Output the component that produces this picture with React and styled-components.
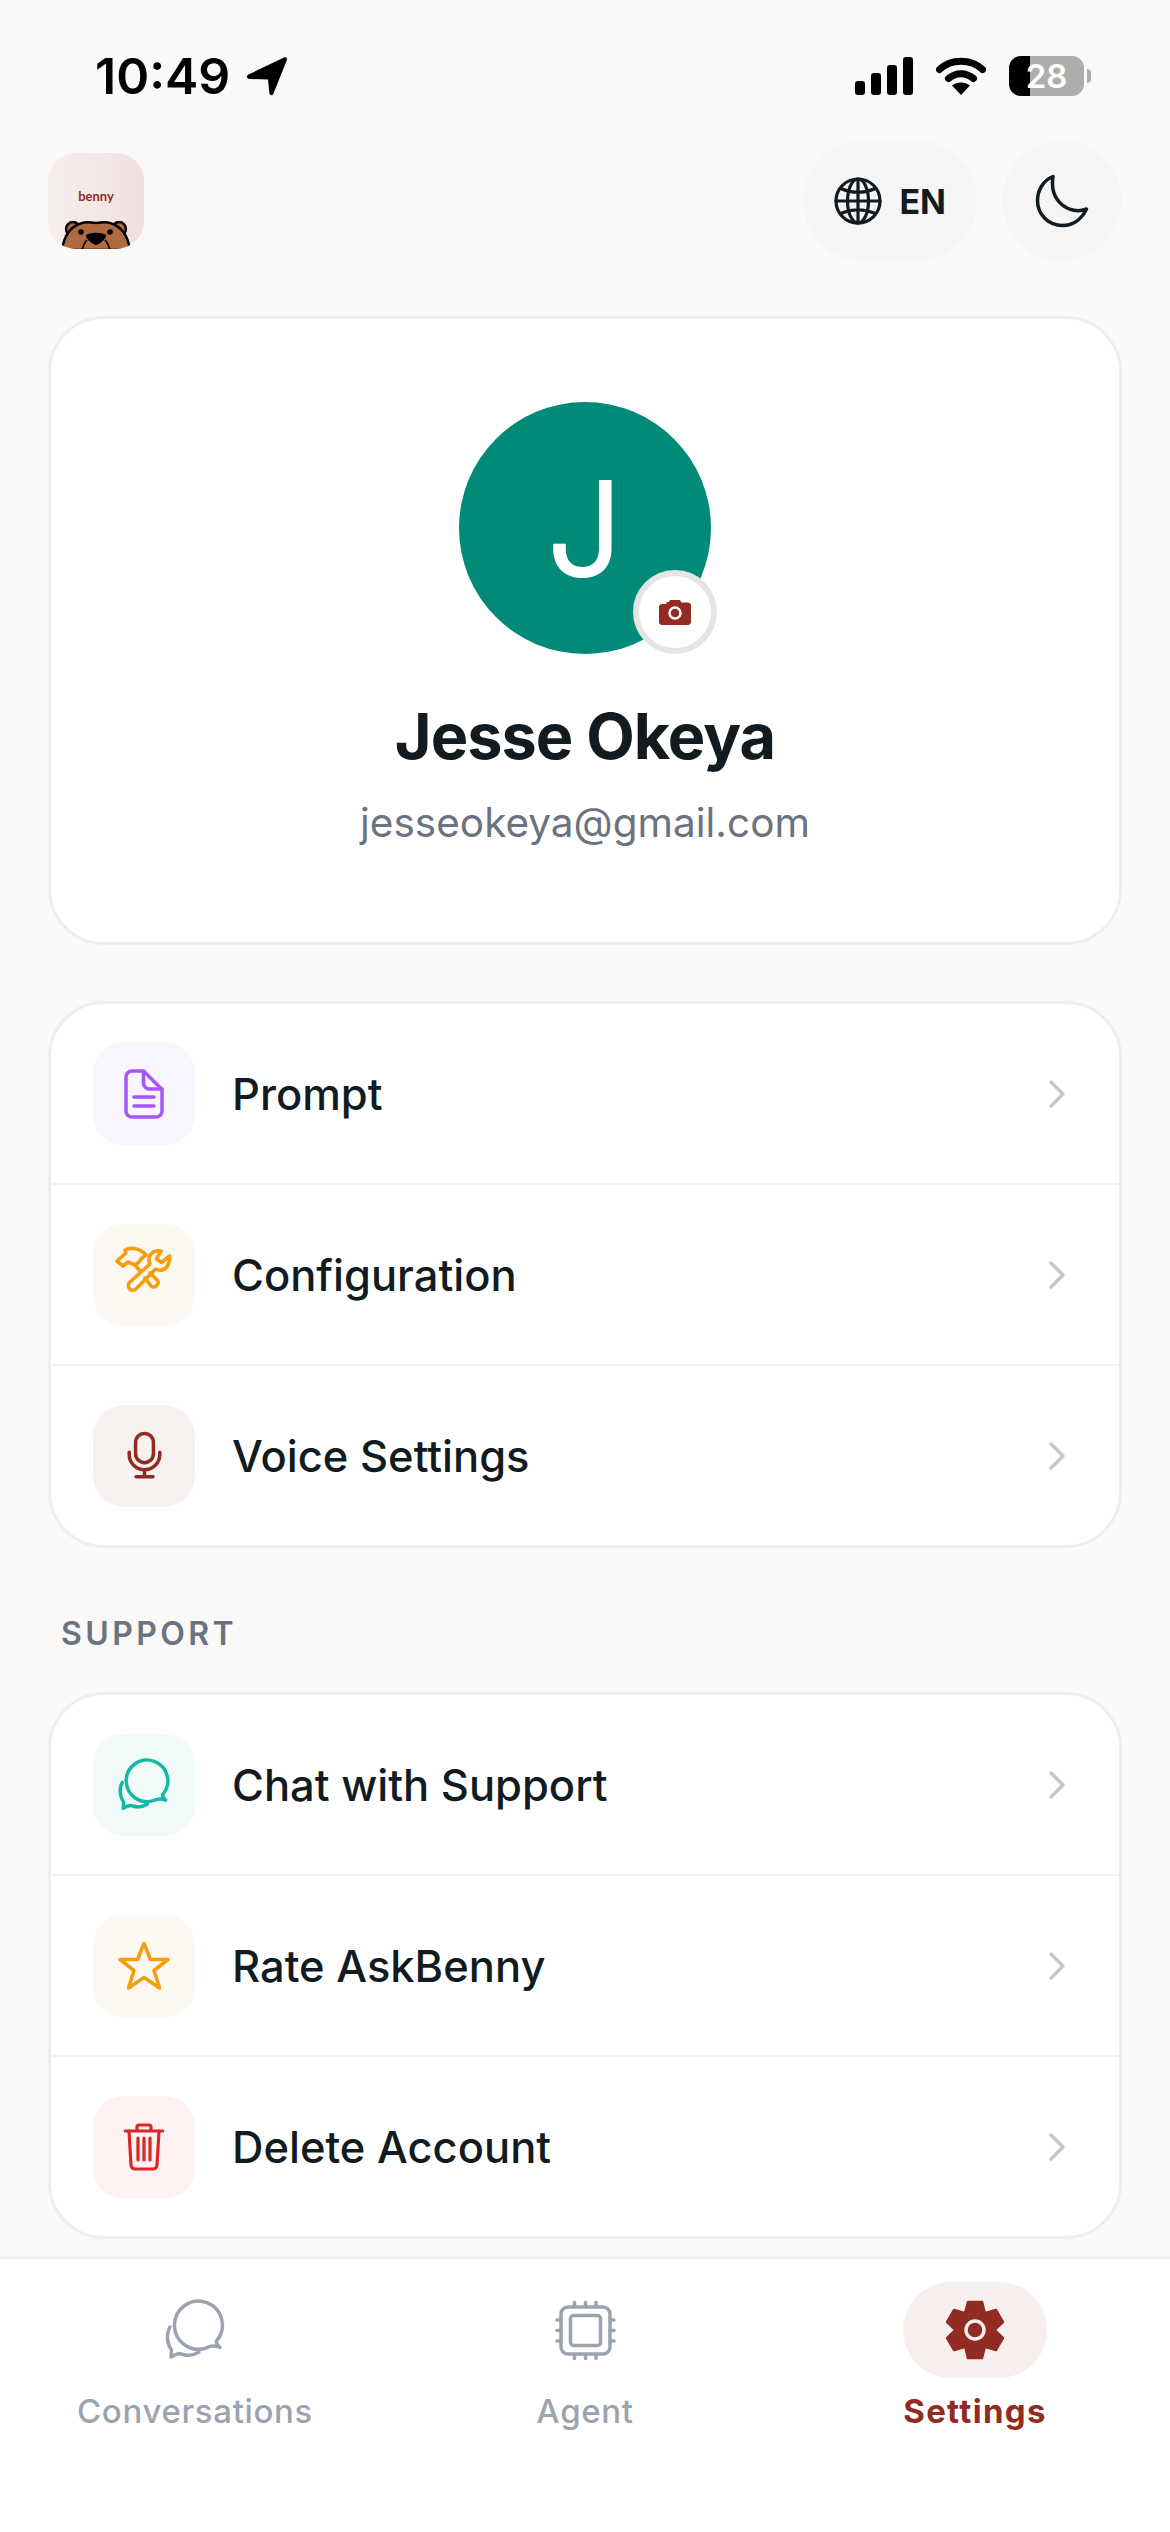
import React from 'react';
import styled, { createGlobalStyle } from 'styled-components';

const BRAND = '#922b21';
const INK = '#121b1f';

const GlobalStyle = createGlobalStyle`
  * { box-sizing: border-box; }
  html, body { margin: 0; padding: 0; background: #faf9f7; }
  body { font-family: Inter, "Liberation Sans", sans-serif; color: ${INK}; }
`;

const Screen = styled.div`
  width: 1170px;
  height: 2532px;
  display: flex;
  flex-direction: column;
  overflow: hidden;
`;

const Content = styled.main`
  flex: 1;
  min-height: 0;
`;

const StatusBar = styled.div`
  height: 141px;
  padding: 54px 79px 0 95px;
  display: flex;
  justify-content: space-between;
  align-items: flex-start;
  color: #000;
`;

const StatusGroup = styled.div`
  display: flex;
  align-items: center;
  height: 44px;
  gap: ${(p) => p.$gap}px;
`;

const Time = styled.span`
  font-size: 50px;
  font-weight: 600;
  line-height: 44px;
`;

const Battery = styled.div`
  position: relative;
  width: 75px;
  height: 40px;
  border-radius: 12px;
  background: linear-gradient(to right, #000 21px, #aeadab 21px);
  color: #fff;
  font-size: 33px;
  font-weight: 600;
  line-height: 40px;
  text-align: center;
  margin-right: 7px;

  &::after {
    content: '';
    position: absolute;
    right: -7px;
    top: 13px;
    width: 4px;
    height: 14px;
    border-radius: 0 4px 4px 0;
    background: #aeadab;
  }
`;

const Header = styled.header`
  display: flex;
  justify-content: space-between;
  align-items: center;
  height: 120px;
  padding: 0 48px 0 48px;
`;

const Logo = styled.div`
  width: 96px;
  height: 96px;
  border-radius: 28px;
  overflow: hidden;
  padding-top: 34px;
  display: flex;
  flex-direction: column;
  align-items: center;
  background: linear-gradient(to right, #f7efee, #f0dfde);
`;

const LogoText = styled.span`
  font-family: Lato, sans-serif;
  font-size: 13px;
  font-weight: 700;
  line-height: 18px;
  color: ${BRAND};
`;

const BeaverArt = styled.svg`
  margin-top: auto;
  display: block;
`;

const HeaderActions = styled.div`
  display: flex;
  gap: 25px;
`;

const RoundButton = styled.button`
  height: 120px;
  min-width: 120px;
  border: 0;
  border-radius: 60px;
  padding: ${(p) => (p.$wide ? '0 31px' : '0')};
  background: #f5f5f5;
  color: ${INK};
  display: flex;
  align-items: center;
  justify-content: center;
  gap: 17px;
  font-family: inherit;
  font-size: 34px;
  font-weight: 700;
`;

const Card = styled.section`
  margin: ${(p) => p.$top}px 48px 0 48px;
  background: #fff;
  border: 3px solid #efeeed;
  border-radius: 56px;
  overflow: hidden;
`;

const ProfileBody = styled.div`
  height: 623px;
  padding-top: 83px;
  display: flex;
  flex-direction: column;
  align-items: center;
`;

const AvatarWrap = styled.div`
  position: relative;
  width: 252px;
  height: 252px;
`;

const Avatar = styled.div`
  width: 100%;
  height: 100%;
  border-radius: 50%;
  background: #028a79;
  color: #fff;
  font-size: 134px;
  font-weight: 400;
  display: flex;
  align-items: center;
  justify-content: center;
`;

const CameraBadge = styled.div`
  position: absolute;
  left: 174px;
  top: 168px;
  width: 84px;
  height: 84px;
  border-radius: 50%;
  background: #fff;
  border: 6px solid #e5e5e5;
  display: flex;
  align-items: center;
  justify-content: center;
`;

const Name = styled.h1`
  margin: 46px 0 0;
  font-size: 63px;
  line-height: 72px;
  font-weight: 700;
  letter-spacing: -1px;
`;

const Email = styled.div`
  margin-top: 26px;
  font-size: 40.5px;
  line-height: 50px;
  color: #6b7280;
`;

const Row = styled.div`
  height: ${(p) => (p.$first ? 179 : 181)}px;
  padding: 0 53px 0 42px;
  display: flex;
  align-items: center;
  border-top: ${(p) => (p.$first ? '0' : '2px solid #f3f3f3')};
`;

const Tile = styled.div`
  width: 102px;
  height: 102px;
  flex: none;
  border-radius: 30px;
  background: ${(p) => p.$bg};
  display: flex;
  align-items: center;
  justify-content: center;
`;

const RowLabel = styled.span`
  flex: 1;
  margin-left: 37px;
  font-size: 43.5px;
  font-weight: 500;
`;

const SectionLabel = styled.div`
  margin: 66px 0 38px 61px;
  font-size: 32px;
  line-height: 40px;
  font-weight: 600;
  letter-spacing: 3.4px;
  color: #6b7280;
`;

const Nav = styled.nav`
  height: 276px;
  flex: none;
  padding-top: 23px;
  background: #fff;
  border-top: 3px solid #f0f0ef;
  display: grid;
  grid-template-columns: repeat(3, 1fr);
  align-items: start;
`;

const NavItem = styled.div`
  display: flex;
  flex-direction: column;
  align-items: center;
  font-size: 33px;
  line-height: 44px;
  letter-spacing: ${(p) => (p.$active ? 1.3 : 0.65)}px;
  font-weight: ${(p) => (p.$active ? 700 : 500)};
  color: ${(p) => (p.$active ? BRAND : '#9ca3af')};
`;

const NavPill = styled.div`
  width: 144px;
  height: 96px;
  margin-bottom: 11px;
  border-radius: 48px;
  background: ${(p) => (p.$active ? '#f6efed' : 'transparent')};
  display: flex;
  align-items: center;
  justify-content: center;
`;

const Outline = ({ w, h, box, color, sw = 3.5, children }) => (
  <svg width={w} height={h} viewBox={box} fill="none" stroke={color} strokeWidth={sw} strokeLinecap="round" strokeLinejoin="round">
    {children}
  </svg>
);

const LocationArrow = () => (
  <svg width="42" height="40" viewBox="0 0 42 40">
    <path d="M38 1.5c2-.8 3.4.8 2.8 2.8L27.5 37.5c-1 2.5-4 2-4.2-.7L22 23.5 3.5 23c-3 0-3.5-3.3-1-4.5z" fill="#000" />
  </svg>
);

const Signal = () => (
  <svg width="58" height="38" viewBox="0 0 58 38" fill="#000">
    <rect x="0" y="24" width="10" height="14" rx="3" />
    <rect x="16" y="16" width="10" height="22" rx="3" />
    <rect x="32" y="8" width="10" height="30" rx="3" />
    <rect x="48" y="0" width="10" height="38" rx="3" />
  </svg>
);

const Wifi = () => (
  <svg width="50" height="38" viewBox="0 0 50 38">
    <path d="M3.5 12.5C15 1.5 35 1.5 46.5 12.5" fill="none" stroke="#000" strokeWidth="7" strokeLinecap="round" />
    <path d="M12.5 21.5C20 15 30 15 37.5 21.5" fill="none" stroke="#000" strokeWidth="7" strokeLinecap="round" />
    <path d="M16 28.5c5-4 13-4 18 0L25 38z" fill="#000" />
  </svg>
);

const Beaver = () => (
  <BeaverArt width="72" height="31" viewBox="0 0 72 31">
    <circle cx="13" cy="11" r="7" fill="#b06a3f" stroke="#000" strokeWidth="2.4" />
    <circle cx="59" cy="11" r="7" fill="#b06a3f" stroke="#000" strokeWidth="2.4" />
    <path d="M2 32C4 18 11 8 22 5c5-2 9 0 14 0s9-2 14 0c11 3 18 13 20 27z" fill="#b06a3f" stroke="#000" strokeWidth="2.4" />
    <circle cx="21" cy="14" r="2.8" fill="#000" />
    <circle cx="50" cy="14" r="2.8" fill="#000" />
    <path d="M26 17c5-3 15-3 20 0 1 3-6 9-10 10-4-1-11-7-10-10z" fill="#000" />
    <path d="M22 32c1-4 2-7 5-10M50 32c-1-4-2-7-5-10" fill="none" stroke="#000" strokeWidth="1.6" />
  </BeaverArt>
);

const GlobeIcon = () => (
  <Outline w="48" h="48" box="0 0 48 48" color={INK} sw="3.2">
    <circle cx="24" cy="24" r="22" />
    <ellipse cx="24" cy="24" rx="10.5" ry="22" />
    <path d="M24 2v44M2 24h44M6.5 11.5Q24 19 41.5 11.5M6.5 36.5Q24 29 41.5 36.5" />
  </Outline>
);

const MoonIcon = () => (
  <Outline w="54" h="54" box="0 0 54 54" color={INK} sw="3.5">
    <path d="M18 2.5C8 6.5 2.5 16.5 2.5 26.5c0 14 11 25 25 25 10 0 19-6 24-16.5C35 41.5 14 28 18 2.5z" />
  </Outline>
);

const CameraIcon = () => (
  <svg width="32" height="26" viewBox="0 0 32 26">
    <path d="M3 5h4l1-2h2l1-2h10l1.5 2.5H29c1.600 0 3 1.400 3 3V23c0 1.600-1.400 3-3 3H3c-1.600 0-3-1.400-3-3V8c0-1.600 1.400-3 3-3z" fill={BRAND} />
    <circle cx="16" cy="14" r="5.5" fill="none" stroke="#fff" strokeWidth="2.4" />
  </svg>
);

const DocIcon = () => (
  <Outline w="40" h="50" box="0 0 40 50" color="#a855f7" sw="3.5">
    <path d="M8 2h11.5L38 20.5V42a6 6 0 0 1-6 6H8a6 6 0 0 1-6-6V8a6 6 0 0 1 6-6z" />
    <path d="M19.5 2v12a6 6 0 0 0 6 6H38M10 28h20M10 37h20" />
  </Outline>
);

const ToolsIcon = () => (
  <Outline w="70" h="60" box="0 0 70 60" color="#f59e0b" sw="3.6">
    <path d="M41 19 20.5 37.5a4.600 4.600 0 0 0 6.500 6.500L46.500 24c6 3 11 0 13-5 1-3 1.500-5 1-8l-8 6.500-5-3.500 4.500-8c-5-1-9 1-11 4.500-1.500 3-1.500 5.500 0 8.500z" />
    <path d="M37 10C31 3 22 2 16 5l1 3-9 8 6 5 5-4 7 3 4-3c1.500-3 4-5 7-7z" />
    <path d="M26 20l5 6M36 33l6 8a4.600 4.600 0 0 0 7-5l-8-8" />
  </Outline>
);

const MicIcon = () => (
  <Outline w="51" h="51" box="0 0 24 24" color={BRAND} sw="1.65">
    <rect x="7.8" y="1.6" width="8.4" height="13.8" rx="4.2" />
    <path d="M4.8 10.5v1a7.2 7.2 0 0 0 14.4 0v-1M12 18.700V22M8 22h8" />
  </Outline>
);

const ChatIcon = ({ color, w, h, sw }) => (
  <Outline w={w} h={h} box="0 0 90 80" color={color} sw={sw}>
    <path d="M66.5 51A24 24 0 1 0 57 57.6Q63 54.5 70 57.5Q66 54 66.5 51z" />
    <path d="M20 37C16 44 17 54 21.5 60L21 67Q28 62 33 64.5Q41 67 49 62" />
  </Outline>
);

const StarIcon = () => (
  <Outline w="52" h="50" box="0 0 52 50" color="#f59e0b" sw="3.5">
    <path d="M26 2.5 32.5 18.5H50L36 29.5 41.5 47 26 36.5 10.5 47 16 29.5 2 18.500H19.500z" />
  </Outline>
);

const TrashIcon = () => (
  <Outline w="40" h="48" box="0 0 40 48" color="#dc2626" sw="3.2">
    <path d="M1.5 8h37M13 8V4a2 2 0 0 1 2-2h10a2 2 0 0 1 2 2v4" />
    <path d="M5 8l2 34a4 4 0 0 0 4 4h18a4 4 0 0 0 4-4l2-34M14 15v22M20 15v22M26 15v22" />
  </Outline>
);

const CpuIcon = () => (
  <Outline w="90" h="80" box="0 0 90 80" color="#9ca3af" sw="3.5">
    <rect x="21" y="17" width="49" height="47" rx="7" />
    <rect x="30.5" y="25.5" width="30" height="30" rx="3" />
    <path d="M34.5 12.5v4M45.5 12.5v4M56 12.5v4M34.5 64.5v4M45.5 64.5v4M56 64.5v4M17 30h4M17 40.5h4M17 51h4M70 30h4M70 40.5h4M70 51h4" />
  </Outline>
);

// six teeth, worked out once instead of typing the points by hand
const polar = (deg, r) => {
  const a = (deg * Math.PI) / 180;
  return `${(30 + r * Math.cos(a)).toFixed(1)} ${(30 + r * Math.sin(a)).toFixed(1)}`;
};
const gearPath = [-90, -30, 30, 90, 150, 210]
  .map((a) => `L${polar(a - 14, 29)} L${polar(a + 14, 29)} L${polar(a + 30, 19.5)}`)
  .join(' ')
  .replace(/^L/, 'M') + ' Z';

const GearIcon = () => (
  <svg width="60" height="60" viewBox="0 0 60 60">
    <path d={gearPath} fill={BRAND} stroke={BRAND} strokeWidth="2.5" strokeLinejoin="round" />
    <circle cx="30" cy="30" r="9" fill="none" stroke="#f6efed" strokeWidth="3.5" />
  </svg>
);

const Chevron = () => (
  <Outline w="18" h="30" box="0 0 18 30" color="#c4c7cc" sw="3.5">
    <path d="M3 3l12 12L3 27" />
  </Outline>
);

const topRows = [
  { label: 'Prompt', bg: '#f9f5fe', icon: <DocIcon /> },
  { label: 'Configuration', bg: '#fdf8f2', icon: <ToolsIcon /> },
  { label: 'Voice Settings', bg: '#f7f2f0', icon: <MicIcon /> },
];

const supportRows = [
  { label: 'Chat with Support', bg: '#f0faf8', icon: <ChatIcon color="#14b8a6" w={78} h={70} sw={4} /> },
  { label: 'Rate AskBenny', bg: '#fdf8f2', icon: <StarIcon /> },
  { label: 'Delete Account', bg: '#fdf1f1', icon: <TrashIcon /> },
];

const MenuRows = ({ rows }) =>
  rows.map((row, i) => (
    <Row key={row.label} $first={i === 0}>
      <Tile $bg={row.bg}>{row.icon}</Tile>
      <RowLabel>{row.label}</RowLabel>
      <Chevron />
    </Row>
  ));

const App = () => (
  <Screen>
    <GlobalStyle />
    <Content>
      <StatusBar>
        <StatusGroup $gap={16}>
          <Time>10:49</Time>
          <LocationArrow />
        </StatusGroup>
        <StatusGroup $gap={23}>
          <Signal />
          <Wifi />
          <Battery>28</Battery>
        </StatusGroup>
      </StatusBar>

      <Header>
        <Logo>
          <LogoText>benny</LogoText>
          <Beaver />
        </Logo>
        <HeaderActions>
          <RoundButton $wide>
            <GlobeIcon />
            EN
          </RoundButton>
          <RoundButton>
            <MoonIcon />
          </RoundButton>
        </HeaderActions>
      </Header>

      <Card $top={55}>
        <ProfileBody>
          <AvatarWrap>
            <Avatar>J</Avatar>
            <CameraBadge>
              <CameraIcon />
            </CameraBadge>
          </AvatarWrap>
          <Name>Jesse Okeya</Name>
          <Email>jesseokeya@gmail.com</Email>
        </ProfileBody>
      </Card>

      <Card $top={56}>
        <MenuRows rows={topRows} />
      </Card>

      <SectionLabel>SUPPORT</SectionLabel>

      <Card $top={0}>
        <MenuRows rows={supportRows} />
      </Card>
    </Content>

    <Nav>
      <NavItem>
        <NavPill>
          <ChatIcon color="#9ca3af" w={90} h={80} sw={3.5} />
        </NavPill>
        Conversations
      </NavItem>
      <NavItem>
        <NavPill>
          <CpuIcon />
        </NavPill>
        Agent
      </NavItem>
      <NavItem $active>
        <NavPill $active>
          <GearIcon />
        </NavPill>
        Settings
      </NavItem>
    </Nav>
  </Screen>
);

export default App;
